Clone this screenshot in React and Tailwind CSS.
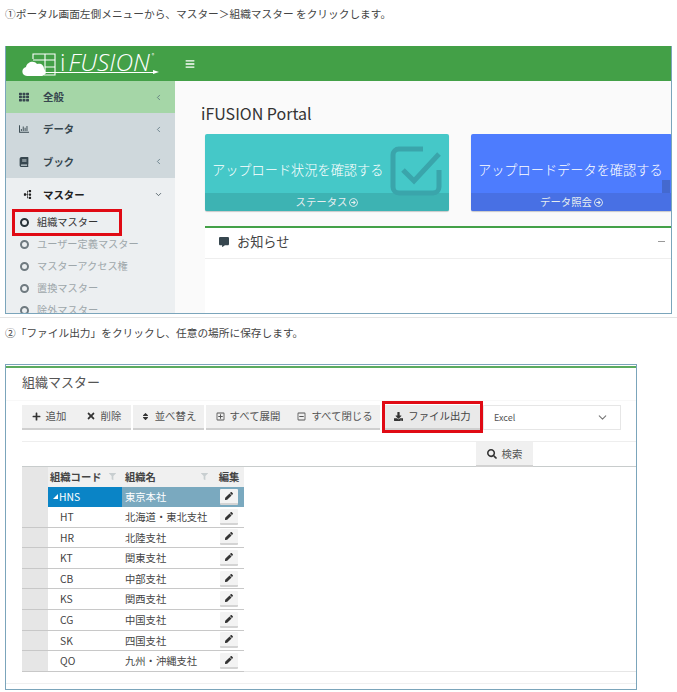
import React from "react";
import {
  FaTh,
  FaRegChartBar,
  FaBook,
  FaSitemap,
  FaCommentAlt,
  FaPlus,
  FaTimes,
  FaSort,
  FaRegPlusSquare,
  FaRegMinusSquare,
  FaDownload,
  FaSearch,
  FaPen,
  FaFilter,
  FaBars,
  FaRegArrowAltCircleRight,
} from "react-icons/fa";
import { FiChevronDown, FiChevronLeft } from "react-icons/fi";

const menus = [
  { label: "全般", Icon: FaTh, cls: "h-8 bg-[#a5d6a7]" },
  { label: "データ", Icon: FaRegChartBar, cls: "h-8 bg-[#cfd8dc]" },
  { label: "ブック", Icon: FaBook, cls: "h-[33px] bg-[#cfd8dc]" },
];

const subMenus = ["ユーザー定義マスター", "マスターアクセス権", "置換マスター", "除外マスター"];

const rows = [
  ["HT", "北海道・東北支社"],
  ["HR", "北陸支社"],
  ["KT", "関東支社"],
  ["CB", "中部支社"],
  ["KS", "関西支社"],
  ["CG", "中国支社"],
  ["SK", "四国支社"],
  ["QO", "九州・沖縄支社"],
];

const Logo = () => (
  <div className="relative flex items-center w-[155px] ml-[16px] h-[35px] shrink-0">
    <svg width="36" height="26" viewBox="0 0 36 26" className="shrink-0">
      <path d="M11 8V3h22v21h-11" fill="none" stroke="#fff" strokeWidth="1.1" />
      <path d="M23 3v20M11 9h22M23 16h10" fill="none" stroke="#fff" strokeWidth="1.1" />
      <path d="M5 25c-6 0-6-8-1-9 1-5 8-7 11-3 4-1 7 1 7 5 2 1 2 7-2 7z" fill="#fff" />
    </svg>
    <span className="ml-[2px] mb-[4px] text-white text-[24px] font-light leading-[30px] font-['Open_Sans',sans-serif]">i</span>
    <span className="ml-[3px] pr-[2px] mb-[4px] text-white text-[24.5px] font-light italic leading-[30px] font-['Open_Sans',sans-serif]">FUSION</span>
    <span className="text-white text-[5px] leading-none self-start mt-[6px]">®</span>
    <div className="absolute left-[23px] w-[110px] top-[26px] h-[1px] bg-white" />
    <div className="absolute left-[131px] top-[24px] w-0 h-0 border-y-[2.5px] border-y-transparent border-l-[6px] border-l-white" />
  </div>
);

const Sidebar = () => (
  <div className="w-[169px] shrink-0 bg-[#eceff1] overflow-hidden">
    {menus.map(({ label, Icon, cls }) => (
      <div key={label} className={`flex items-center pl-[13px] pr-[12px] text-[#37474f] ${cls}`}>
        <Icon className="text-[10px] w-[10px] text-[#37474f]" />
        <span className="ml-[14px] text-[10.4px] font-bold flex-1">{label}</span>
        <FiChevronLeft className="text-[9px] text-[#546e7a]" />
      </div>
    ))}
    <div className="flex items-center h-[33px] pl-[17px] pr-[12px] text-[#212121]">
      <FaSitemap className="text-[9px] w-[9px] -rotate-90" />
      <span className="ml-[11px] text-[10.4px] font-bold flex-1">マスター</span>
      <FiChevronDown className="text-[9px] text-[#37474f]" />
    </div>
    <div className="flex items-center h-[22px] pl-[14px] text-[10.2px] text-[#333]">
      <span className="w-[9px] h-[9px] rounded-full border-2 border-[#263238]" />
      <span className="ml-[8px]">組織マスター</span>
    </div>
    {subMenus.map((label) => (
      <div key={label} className="flex items-center h-[22px] pl-[14px] text-[10.2px] text-[#9ea7ab]">
        <span className="w-[9px] h-[9px] rounded-full border-2 border-[#6f7a80]" />
        <span className="ml-[8px]">{label}</span>
      </div>
    ))}
  </div>
);

const Card = ({ title, footer, cls, footCls, width, children }) => (
  <div className={`relative shrink-0 h-[77px] rounded-[2px] overflow-hidden text-white shadow-[0_1px_1px_rgba(0,0,0,0.2)] ${cls} ${width}`}>
    <div className="h-[59px] pt-[27px] pl-[7px] text-[13.2px] leading-[18px] font-light whitespace-nowrap">{title}</div>
    {children}
    <div className={`h-[18px] flex items-center justify-center gap-[2px] text-[10.4px] text-[#e6eef0] ${footCls}`}>
      {footer}
      <FaRegArrowAltCircleRight className="text-[9px]" />
    </div>
  </div>
);

const Portal = () => (
  <div className="flex-1 min-w-0 bg-[#fafafa] overflow-hidden pl-[30px]">
    <div className="text-[16px] leading-[20px] text-[#333] -ml-[4px] pt-[22px] h-[53px]">iFUSION Portal</div>
    <div className="flex gap-[22px]">
      <Card title="アップロード状況を確認する" footer="ステータス" cls="bg-[#45c8c8]" footCls="bg-[#3db3b3]" width="w-[244px]">
        <svg width="52" height="52" viewBox="0 0 52 52" className="absolute right-[7px] top-[12px]">
          <path d="M33 3H9a6 6 0 0 0-6 6v32a6 6 0 0 0 6 6h34a6 6 0 0 0 6-6V24" fill="none" stroke="#3aa5ab" strokeWidth="5" />
          <path d="M13 24l11 11L49 8" fill="none" stroke="#3aa5ab" strokeWidth="5" />
        </svg>
      </Card>
      <Card title="アップロードデータを確認する" footer="データ照会" cls="bg-[#4d7cfe]" footCls="bg-[#4870e4]" width="w-[201px]">
        <div className="absolute right-[2px] top-[46px] w-[8px] h-[13px] bg-[#4469cf]" />
      </Card>
    </div>
    <div className="mt-[15px] h-[33px] border-t-2 border-[#43a047] border-b border-b-[#eeeeee] bg-white flex items-center pl-[14px] pr-[6px] pb-[3px] text-[13.2px] text-[#444]">
      <FaCommentAlt className="text-[10px] text-[#37474f] mr-[8px]" />
      <span className="flex-1">お知らせ</span>
      <span className="w-[7px] h-[1px] bg-[#999]" />
    </div>
    <div className="h-[60px] bg-white" />
  </div>
);

const ToolButton = ({ children, cls }) => (
  <div className={`h-[25px] flex items-center justify-center gap-[5px] pb-[1px] bg-[#f0f0f0] border-b-2 border-b-[#cfcfcf] text-[10.4px] text-[#555] whitespace-nowrap ${cls}`}>
    {children}
  </div>
);

const PenButton = () => (
  <div className="w-[18px] h-[16px] bg-[#f3f3f3] border-b-2 border-[#d4d4d4] rounded-[1px] flex items-center justify-center">
    <FaPen className="text-[8px] text-[#333]" />
  </div>
);

const TreeTable = () => (
  <div className="ml-[16px] w-[222px] grid grid-cols-[26px_74px_92px_30px] text-[10.3px] text-[#444]">
    <div className="bg-[#e6e6e6] h-[20px]" />
    <div className="bg-[#f0f0f0] h-[20px] flex items-center justify-between pl-[2px] pr-[6px] pb-[1px] font-bold">
      組織コード
      <FaFilter className="text-[7px] text-[#c8ced0]" />
    </div>
    <div className="bg-[#f0f0f0] h-[20px] flex items-center justify-between pl-[3px] pr-[6px] pb-[1px] font-bold">
      組織名
      <FaFilter className="text-[7px] text-[#c8ced0]" />
    </div>
    <div className="bg-[#f0f0f0] h-[20px] flex items-center justify-center pb-[1px] font-bold">編集</div>

    <div className="bg-[#e6e6e6] h-[20px]" />
    <div className="bg-[#0a84c6] h-[20px] text-white flex items-center pl-[5px] gap-[1px] pb-[1px]">
      <span className="w-0 h-0 border-l-[5px] border-l-transparent border-b-[5px] border-b-white" />
      HNS
    </div>
    <div className="bg-[#7aa9bf] h-[20px] text-white flex items-center px-[3px] pb-[1px]">東京本社</div>
    <div className="bg-[#7aa9bf] h-[20px] flex items-center justify-center">
      <PenButton />
    </div>

    {rows.map(([code, name]) => (
      <React.Fragment key={code}>
        <div className="bg-[#e6e6e6] h-[20.6px] border-b border-[#c8c8c8]" />
        <div className="h-[20.6px] border-b border-[#c8c8c8] flex items-center pl-[12px]">{code}</div>
        <div className="h-[20.6px] border-b border-[#c8c8c8] flex items-center px-[3px] whitespace-nowrap">{name}</div>
        <div className="h-[20.6px] border-b border-[#c8c8c8] flex items-center justify-center">
          <PenButton />
        </div>
      </React.Fragment>
    ))}
  </div>
);

const App = () => (
  <div className="w-[677px] h-[692px] overflow-hidden bg-white font-['Noto_Sans_CJK_JP','Noto_Sans',sans-serif]">
    <div className="h-[46px] pl-[5px] pt-[6px] text-[10.7px] leading-[16px] text-[#444]">
      ①ポータル画面左側メニューから、マスター＞組織マスター をクリックします。
    </div>

    <div className="mx-[5px] h-[268px] w-[667px] border-x border-b border-[#7ba5bb] overflow-hidden">
      <div className="h-[35px] bg-[#43a047] flex items-center">
        <Logo />
        <FaBars className="ml-[8px] text-[10px] text-white" />
      </div>
      <div className="flex h-[232px] overflow-hidden relative">
        <Sidebar />
        <Portal />
        <div className="absolute left-[6px] top-[128px] w-[110px] h-[27px] border-[3px] border-[#e00a14]" />
      </div>
    </div>

    <div className="mt-[3px] h-[1px] bg-[#e4e4e4]" />

    <div className="h-[46px] pl-[5px] pt-[7px] text-[10.7px] leading-[16px] text-[#444]">
      ②「ファイル出力」をクリックし、任意の場所に保存します。
    </div>

    <div className="ml-[5px] w-[632px] h-[326px] border border-[#7ba5bb] overflow-hidden relative">
      <div className="h-[2px] mt-[1px] bg-[#5cab5f]" />
      <div className="h-[33px] pl-[16px] pt-[4px] text-[13px] leading-[20px] text-[#555] border-b border-[#f8f8f8]">組織マスター</div>
      <div className="flex items-start ml-[16px] mt-[4px] h-[25px]">
        <ToolButton cls="w-[54px]"><FaPlus className="text-[9px] text-[#333]" />追加</ToolButton>
        <ToolButton cls="w-[55px]"><FaTimes className="text-[10px] text-[#333]" />削除</ToolButton>
        <ToolButton cls="w-[71px] ml-[2px]"><FaSort className="text-[9px] text-[#333]" />並べ替え</ToolButton>
        <ToolButton cls="w-[84px] ml-[2px]"><FaRegPlusSquare className="text-[9px]" />すべて展開</ToolButton>
        <ToolButton cls="w-[90px]"><FaRegMinusSquare className="text-[9px]" />すべて閉じる</ToolButton>
        <ToolButton cls="w-[95px] ml-[5px] !bg-[#e9e9e9] !text-[#444]"><FaDownload className="text-[9px] text-[#333]" />ファイル出力</ToolButton>
        <div className="ml-[3px] w-[138px] h-[25px] border border-[#e6e6e6] flex items-center justify-between pl-[10px] pr-[11px] text-[9px] text-[#555]">
          Excel
          <FiChevronDown className="text-[13px] text-[#777]" />
        </div>
      </div>
      <div className="absolute left-[376px] top-[36px] w-[101px] h-[32px] border-[3px] border-[#e00a14]" />
      <div className="ml-[16px] mt-[11px] h-[26px] border-t border-[#eeeeee] border-b border-b-[#c8cccc] flex justify-end">
        <div className="mr-[103px] w-[57px] h-[25px] bg-[#f0f0f0] border-b-2 border-b-[#d2d2d2] flex items-center justify-center gap-[5px] text-[10.4px] text-[#555]">
          <FaSearch className="text-[10px] text-[#333]" />検索
        </div>
      </div>
      <TreeTable />
      <div className="ml-[16px] border-t border-[#e6e6e6] -mt-[1px]" />
      <div className="mt-[11px] border-t border-[#f0f0f0]" />
    </div>
  </div>
);

export default App;
